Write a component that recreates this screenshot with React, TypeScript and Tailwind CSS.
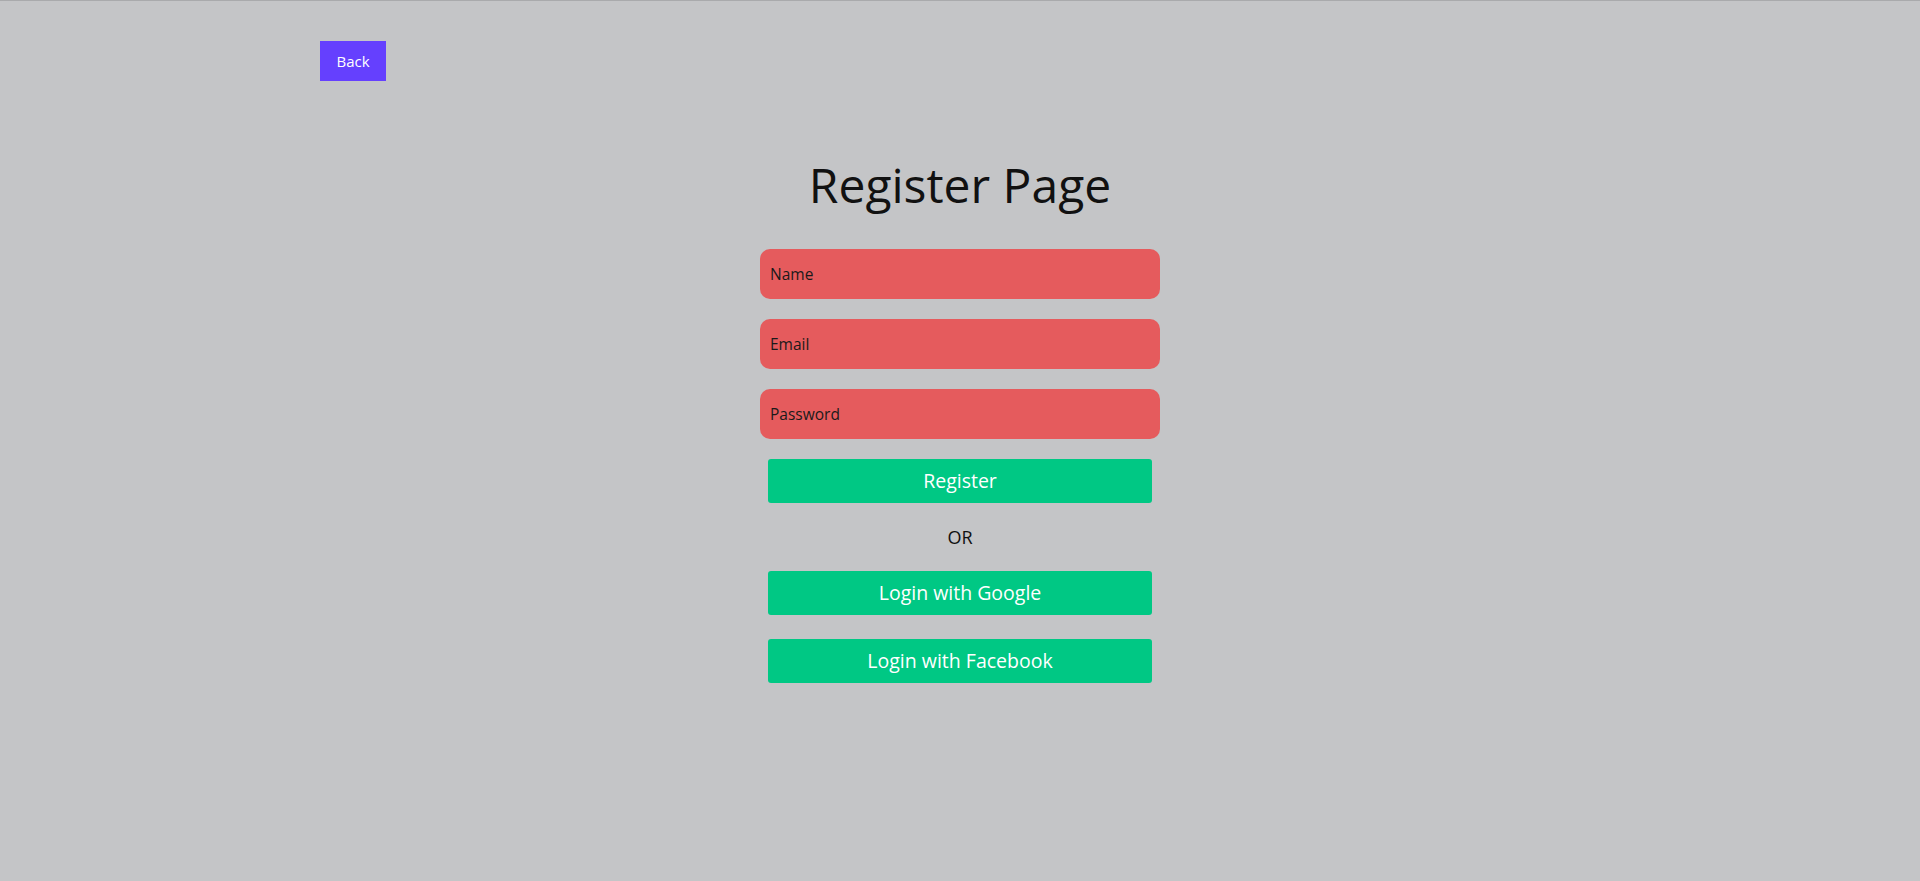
import React from "react";

export default function App() {
  const font = { fontFamily: '"Open Sans", "Noto Sans", sans-serif' };
  return (
    <div
      className="min-h-screen w-full bg-[#c4c5c7] border-t border-[#a9aaac]"
      style={font}
    >
      <div className="w-[1280px] mx-auto flex flex-col">
        <div className="mt-[40px]">
          <button className="h-[40px] w-[66px] bg-[#6540fe] text-white text-[15px] flex items-center justify-center">
            Back
          </button>
        </div>
        <h1 className="mt-[76px] text-center text-[48px] leading-[56px] text-[#111] font-normal">
          Register Page
        </h1>
        <div className="mt-[36px] w-[400px] mx-auto flex flex-col">
          <div className="h-[50px] rounded-[10px] bg-[#e55b5d] flex items-center px-[10px] pt-[2px] text-[15.5px] text-[#1a1a1a]">
            Name
          </div>
          <div className="mt-[20px] h-[50px] rounded-[10px] bg-[#e55b5d] flex items-center px-[10px] pt-[2px] text-[15.5px] text-[#1a1a1a]">
            Email
          </div>
          <div className="mt-[20px] h-[50px] rounded-[10px] bg-[#e55b5d] flex items-center px-[10px] pt-[2px] text-[15.5px] text-[#1a1a1a]">
            Password
          </div>
          <button className="mt-[20px] mx-[8px] h-[44px] rounded-[3px] bg-[#00c884] text-white text-[19.5px] flex items-center justify-center">
            Register
          </button>
          <div className="mt-[22px] h-[24px] leading-[24px] text-center text-[18px] text-[#111]">
            OR
          </div>
          <button className="mt-[22px] mx-[8px] h-[44px] rounded-[3px] bg-[#00c884] text-white text-[19.5px] flex items-center justify-center">
            Login with Google
          </button>
          <button className="mt-[24px] mx-[8px] h-[44px] rounded-[3px] bg-[#00c884] text-white text-[19.5px] flex items-center justify-center">
            Login with Facebook
          </button>
        </div>
      </div>
    </div>
  );
}
